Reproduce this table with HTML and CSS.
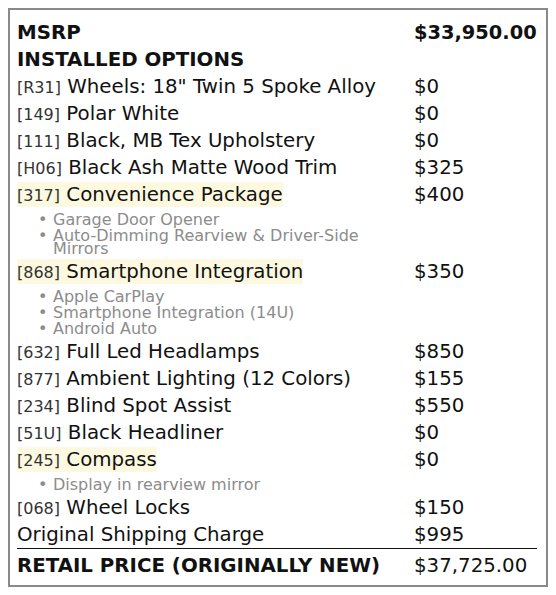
FILE: index.html
```html
<!DOCTYPE html>
<html>
<head>
<meta charset="utf-8">
<link rel="stylesheet" href="styles.css">
</head>
<body>
<div class="box">
  <div class="row head"><div class="label">MSRP</div><div class="price">$33,950.00</div></div>
  <div class="row head"><div class="label">INSTALLED OPTIONS</div><div class="price"></div></div>
  <div class="row"><div class="label"><span class="code">[R31]</span> Wheels: 18" Twin 5 Spoke Alloy</div><div class="price">$0</div></div>
  <div class="row"><div class="label"><span class="code">[149]</span> Polar White</div><div class="price">$0</div></div>
  <div class="row"><div class="label"><span class="code">[111]</span> Black, MB Tex Upholstery</div><div class="price">$0</div></div>
  <div class="row"><div class="label"><span class="code">[H06]</span> Black Ash Matte Wood Trim</div><div class="price">$325</div></div>
  <div class="row"><div class="label"><span class="hl"><span class="code">[317]</span> Convenience Package</span></div><div class="price">$400</div></div>
  <ul class="sub">
    <li>Garage Door Opener</li>
    <li>Auto-Dimming Rearview &amp; Driver-Side Mirrors</li>
  </ul>
  <div class="row"><div class="label"><span class="hl"><span class="code">[868]</span> Smartphone Integration</span></div><div class="price">$350</div></div>
  <ul class="sub">
    <li>Apple CarPlay</li>
    <li>Smartphone Integration (14U)</li>
    <li>Android Auto</li>
  </ul>
  <div class="row"><div class="label"><span class="code">[632]</span> Full Led Headlamps</div><div class="price">$850</div></div>
  <div class="row"><div class="label"><span class="code">[877]</span> Ambient Lighting (12 Colors)</div><div class="price">$155</div></div>
  <div class="row"><div class="label"><span class="code">[234]</span> Blind Spot Assist</div><div class="price">$550</div></div>
  <div class="row"><div class="label"><span class="code">[51U]</span> Black Headliner</div><div class="price">$0</div></div>
  <div class="row"><div class="label"><span class="hl"><span class="code">[245]</span> Compass</span></div><div class="price">$0</div></div>
  <ul class="sub">
    <li>Display in rearview mirror</li>
  </ul>
  <div class="row"><div class="label"><span class="code">[068]</span> Wheel Locks</div><div class="price">$150</div></div>
  <div class="row"><div class="label">Original Shipping Charge</div><div class="price">$995</div></div>
  <div class="row total"><div class="label">RETAIL PRICE (ORIGINALLY NEW)</div><div class="price">$37,725.00</div></div>
</div>
</body>
</html>
```

FILE: styles.css
```css
html, body {
  margin: 0;
  padding: 0;
  background: #ffffff;
}
body {
  padding: 8px;
  font-family: "DejaVu Sans", sans-serif;
  color: #111111;
}
.box {
  border: 2px solid #8a8a8a;
  padding: 9px 0 6px 7px;
  box-sizing: content-box;
  width: 529px;
}
.row {
  display: grid;
  grid-template-columns: 397px 1fr;
  font-size: 19.8px;
  line-height: 27px;
  height: 27px;
  white-space: nowrap;
}
.head {
  font-weight: bold;
}
.head .price {
  font-size: 19.4px;
}
.code {
  font-size: 16px;
  color: #333333;
}
.hl {
  background: #fdf9e1;
  padding: 1px 0;
}
.sub {
  list-style: none;
  margin: 0;
  padding: 5px 0 3px 21px;
  width: 397px;
  box-sizing: border-box;
  font-size: 16px;
  line-height: 13px;
  color: #8c8c8c;
}
.sub li {
  display: flex;
  margin-bottom: 3px;
}
.sub li:last-child {
  margin-bottom: 0;
}
.sub li::before {
  content: "\2022";
  flex: 0 0 15px;
}
.total {
  border-top: 1px solid #111111;
  margin-right: 9px;
  padding-top: 3px;
  height: 27px;
  box-sizing: content-box;
}
.total .label {
  font-weight: bold;
}
```
